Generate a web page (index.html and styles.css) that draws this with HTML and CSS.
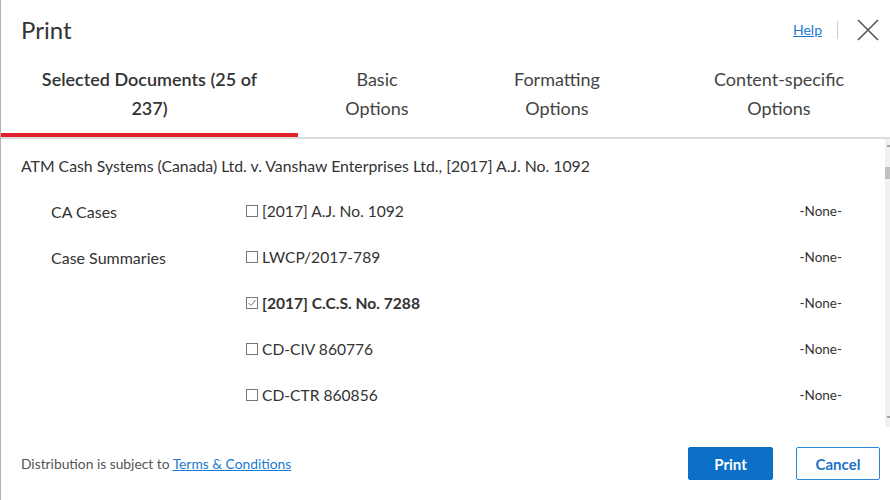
FILE: index.html
```html
<!DOCTYPE html>
<html lang="en">
<head>
<meta charset="utf-8">
<title>Print</title>
<link rel="stylesheet" href="styles.css">
</head>
<body>
<div class="dialog">
  <header class="header">
    <h1 class="title">Print</h1>
    <div class="header-actions">
      <a class="help" href="#">Help</a>
      <span class="sep"></span>
      <button class="close" aria-label="Close">
        <svg width="22" height="22" viewBox="0 0 22 22"><path d="M1 1 L21 21 M21 1 L1 21" stroke="#555" stroke-width="1.6" fill="none"/></svg>
      </button>
    </div>
  </header>
  <nav class="tabs">
    <div class="tab active">Selected Documents (25 of<br>237)</div>
    <div class="tab">Basic<br>Options</div>
    <div class="tab">Formatting<br>Options</div>
    <div class="tab">Content-specific<br>Options</div>
  </nav>
  <section class="body">
    <div class="content">
      <div class="doc-title">ATM Cash Systems (Canada) Ltd. v. Vanshaw Enterprises Ltd., [2017] A.J. No. 1092</div>
      <div class="row">
        <div class="label">CA Cases</div>
        <div class="cite"><span class="box"></span>[2017] A.J. No. 1092</div>
        <div class="none">-None-</div>
      </div>
      <div class="row">
        <div class="label">Case Summaries</div>
        <div class="cite"><span class="box"></span>LWCP/2017-789</div>
        <div class="none">-None-</div>
      </div>
      <div class="row">
        <div class="label"></div>
        <div class="cite bold"><span class="box checked"><svg width="10" height="10" viewBox="0 0 10 10"><path d="M1.5 5 L4 7.5 L8.5 2" stroke="#777" stroke-width="1" fill="none"/></svg></span>[2017] C.C.S. No. 7288</div>
        <div class="none">-None-</div>
      </div>
      <div class="row">
        <div class="label"></div>
        <div class="cite"><span class="box"></span>CD-CIV 860776</div>
        <div class="none">-None-</div>
      </div>
      <div class="row">
        <div class="label"></div>
        <div class="cite"><span class="box"></span>CD-CTR 860856</div>
        <div class="none">-None-</div>
      </div>
    </div>
    <div class="scrollbar">
      <span class="arrow"></span>
      <span class="thumb"></span>
      <span class="arrow down"></span>
    </div>
  </section>
  <footer class="footer">
    <p class="dist">Distribution is subject to <a href="#">Terms &amp; Conditions</a></p>
    <div class="buttons">
      <button class="btn primary">Print</button>
      <button class="btn secondary">Cancel</button>
    </div>
  </footer>
</div>
</body>
</html>
```
FILE: styles.css
```css
* { box-sizing: border-box; }
html, body { margin: 0; padding: 0; background: #fff; }
body {
  font-family: Lato, "Open Sans", sans-serif;
  color: #333;
  width: 890px;
  height: 500px;
  overflow: hidden;
}
.dialog {
  border-left: 1px solid #b0b0b0;
  height: 500px;
  display: flex;
  flex-direction: column;
}
.header {
  height: 62px;
  display: flex;
  align-items: center;
  justify-content: space-between;
  padding: 0 11px 4px 20px;
}
.title {
  margin: 0;
  font-size: 24px;
  font-weight: 400;
  color: #333;
}
.header-actions {
  display: flex;
  align-items: center;
  margin-top: 1px;
}
.help {
  font-size: 14px;
  color: #1b7bd3;
  text-decoration: underline;
}
.sep {
  width: 1px;
  height: 18px;
  background: #ccc;
  margin: 0 19px 0 15px;
}
.close {
  border: 0;
  background: none;
  padding: 0;
  width: 22px;
  height: 22px;
  display: flex;
}
.tabs {
  display: grid;
  grid-template-columns: 297px 158px 202px 242px;
  height: 77px;
  border-bottom: 2px solid #dcdcdc;
}
.tab {
  display: flex;
  align-items: center;
  justify-content: center;
  text-align: center;
  font-size: 18px;
  line-height: 29px;
  color: #444;
  padding-bottom: 12px;
}
.tab.active {
  font-weight: 600;
  color: #333;
  border-bottom: 4px solid #e2202c;
  padding-bottom: 8px;
}
.body {
  flex: 1;
  display: flex;
  min-height: 0;
}
.content {
  flex: 1;
  padding: 16px 43px 0 20px;
}
.doc-title {
  font-size: 15.8px;
  line-height: 22px;
  margin-bottom: 11px;
}
.row {
  display: grid;
  grid-template-columns: 195px 1fr auto;
  align-items: center;
  height: 46px;
  padding-left: 30px;
}
.label {
  font-size: 16px;
}
.cite {
  display: flex;
  align-items: center;
  font-size: 15.6px;
}
.cite.bold { font-weight: 700; }
.box {
  display: inline-flex;
  align-items: center;
  justify-content: center;
  width: 12px;
  height: 12px;
  border: 1px solid #777;
  margin-right: 4px;
}
.none {
  font-size: 13.5px;
  color: #333;
}
.scrollbar {
  width: 5px;
  background: #f1f1f1;
  height: 288px;
  position: relative;
}
.thumb {
  position: absolute;
  left: 0;
  top: 28px;
  width: 5px;
  height: 12px;
  background: #c1c1c1;
}
.arrow {
  position: absolute;
  left: 2px;
  top: 6px;
  width: 3px;
  height: 2px;
  background: #a3a3a3;
}
.arrow.down { top: auto; bottom: 9px; }
.footer {
  height: 73px;
  display: flex;
  align-items: center;
  justify-content: space-between;
  padding: 0 10px 0 20px;
}
.dist {
  margin: 0;
  font-size: 13.8px;
  color: #555;
}
.dist a {
  color: #1b7bd3;
  text-decoration: underline;
}
.buttons {
  display: flex;
  gap: 23px;
}
.btn {
  height: 33px;
  font-family: Lato, sans-serif;
  font-size: 15px;
  font-weight: 700;
  border-radius: 2px;
  padding: 0;
}
.primary {
  width: 85px;
  background: #0b6fc8;
  border: 1px solid #0b6fc8;
  color: #fff;
}
.secondary {
  width: 84px;
  background: #fff;
  border: 1px solid #2a87d8;
  color: #1c72c6;
}
```
